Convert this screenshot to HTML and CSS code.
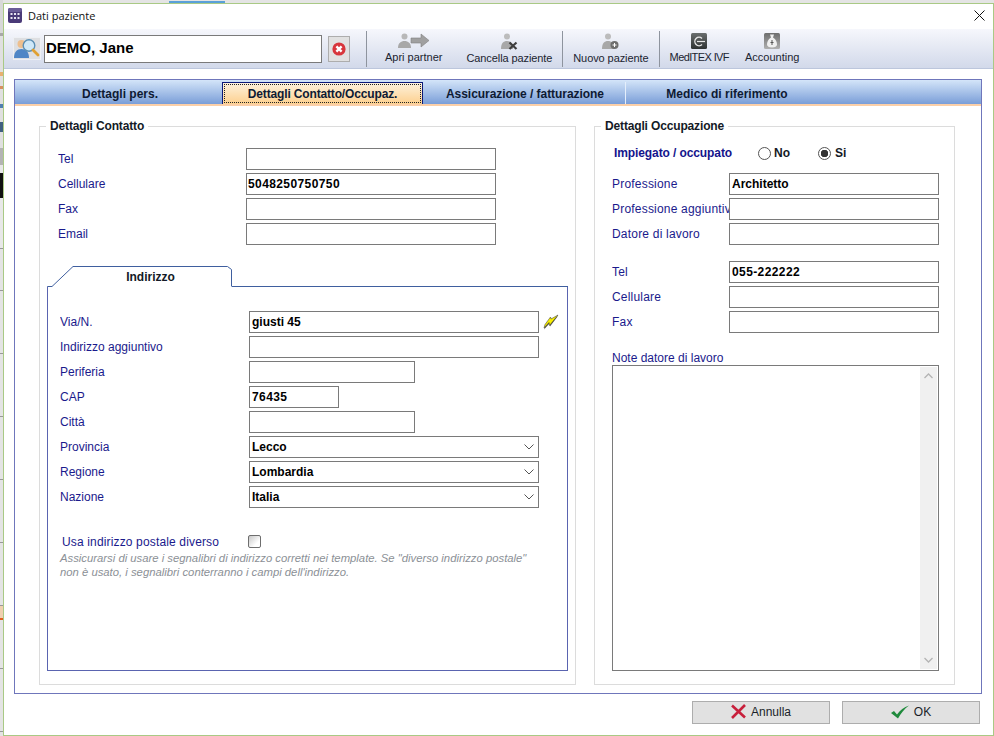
FILE: index.html
```html
<!DOCTYPE html>
<html>
    <head>
        <meta charset="UTF-8">
        <title>Dati paziente</title>
        <link rel="stylesheet" href="styles.css">
    </head>

    <body>
        <div class="window">
            <div class="titlebar">
                <svg class="app-icon" width="14" height="15" viewBox="0 0 14 15">
                    <rect width="14" height="15" rx="2" fill="#4a3a78"/>
                    <rect x="0" y="0" width="14" height="4" rx="2" fill="#6a5c98"/>
                    <g fill="#e8e4f2">
                        <rect x="2.5" y="5" width="2" height="2"/><rect x="6" y="5" width="2" height="2"/><rect x="9.5" y="5" width="2" height="2"/>
                        <rect x="2.5" y="9" width="2" height="2"/><rect x="6" y="9" width="2" height="2"/><rect x="9.5" y="9" width="2" height="2"/>
                    </g>
                </svg>
                <span class="title">Dati paziente</span>
                <svg class="close" width="11" height="11" viewBox="0 0 11 11"><path d="M.5.5l10 10M10.5.5l-10 10" stroke="#111" fill="none"/></svg>
            </div>

            <div class="toolbar">
                <div class="search-btn">
                    <svg width="26" height="21" viewBox="0 0 26 21">
                        <circle cx="7.500" cy="6" r="4" fill="#eebf8e"/>
                        <path d="M0 20c0-6 3-9 7.500-9s7.500 3 7.500 9z" fill="#4f86c6"/>
                        <circle cx="15" cy="7.500" r="5.800" fill="#cfe8f8" stroke="#5b8fb4" stroke-width="1.400"/>
                        <path d="M19 12l5 5" stroke="#e0a030" stroke-width="2.800" stroke-linecap="round"/>
                    </svg>
                </div>
                <input class="name-input" type="text" value="DEMO, Jane">
                <div class="clear-btn">
                    <svg width="14" height="14" viewBox="0 0 14 14">
                        <circle cx="7" cy="7" r="6.600" fill="#d8363c"/>
                        <path d="M4.400 4.400l5.200 5.200M9.600 4.400l-5.200 5.200" stroke="#fff" stroke-width="2.400"/>
                    </svg>
                </div>
                <div class="sep first"></div>
                <div class="tool tool-apri">
                    <svg width="32" height="16" viewBox="0 0 32 16">
                        <circle cx="6.500" cy="3.500" r="3" fill="#b8b8b8"/>
                        <path d="M0 15c0-5 3-7 6.500-7s6.500 2 6.500 7z" fill="#a8a8a8"/>
                        <path d="M13 5h10V1l8 6.500-8 6.500v-4H13z" fill="#a0a0a0" stroke="#808080" stroke-width=".6"/>
                    </svg>
                    <span>Apri partner</span>
                </div>
                <div class="tool tool-canc">
                    <svg width="17" height="17" viewBox="0 0 17 17">
                        <circle cx="6" cy="3.500" r="3" fill="#bcbcbc"/>
                        <path d="M0 16c0-6 2.500-8 6-8s6 2 6 8z" fill="#a8a8a8"/>
                        <path d="M8.500 9.500l7 6.500M15.500 9.500l-7 6.500" stroke="#3e3e3e" stroke-width="2.200"/>
                    </svg>
                    <span>Cancella paziente</span>
                </div>
                <div class="sep"></div>
                <div class="tool tool-nuovo">
                    <svg width="17" height="17" viewBox="0 0 17 17">
                        <circle cx="6" cy="3.500" r="3" fill="#bcbcbc"/>
                        <path d="M0 16c0-6 2.500-8 6-8s6 2 6 8z" fill="#a8a8a8"/>
                        <circle cx="12.500" cy="12" r="4" fill="#6e6e6e"/>
                        <path d="M10.500 12h4M12.500 10v4" stroke="#fff"/>
                    </svg>
                    <span>Nuovo paziente</span>
                </div>
                <div class="sep"></div>
                <div class="tool tool-ivf">
                    <svg width="16" height="16" viewBox="0 0 16 16">
                        <defs><linearGradient id="ivfGrad" x1="0" y1="0" x2="0" y2="1"><stop offset="0" stop-color="#6a6e6e"/><stop offset="1" stop-color="#2e3232"/></linearGradient></defs>
                        <rect width="16" height="16" rx="1.500" fill="url(#ivfGrad)"/>
                        <path d="M11 11.500a4.200 4.200 0 1 1 0-6" stroke="#e8e8e8" stroke-width="1.400" fill="none"/>
                        <path d="M6 8.500h8" stroke="#e8e8e8" stroke-width="1.200"/>
                    </svg>
                    <span>MedITEX IVF</span>
                </div>
                <div class="tool tool-acc">
                    <svg width="16" height="16" viewBox="0 0 16 16">
                        <defs><linearGradient id="accGrad" x1="0" y1="0" x2="0" y2="1"><stop offset="0" stop-color="#6e6e6e"/><stop offset="1" stop-color="#b0b0b0"/></linearGradient></defs>
                        <rect width="16" height="16" rx="1.500" fill="url(#accGrad)"/>
                        <path d="M6 1.500h4L9 4.500c3 1.500 4 5 4 7 0 2-2 3-5 3s-5-1-5-3c0-2 1-5.500 4-7z" fill="#f0f0f0"/>
                        <path d="M8 7v5M6.500 9.500h3" stroke="#555"/>
                    </svg>
                    <span>Accounting</span>
                </div>
            </div>

            <div class="frame">
                <div class="tabs">
                    <div class="tab tab-first">Dettagli pers.</div>
                    <div class="tab active"><span>Dettagli Contatto/Occupaz.</span></div>
                    <div class="tab tab-line">Assicurazione / fatturazione</div>
                    <div class="tab">Medico di riferimento</div>
                </div>

                <div class="frame-body">
                    <fieldset class="group group-left">
                        <legend>Dettagli Contatto</legend>
                        <div class="rows contact-rows">
                            <div class="row"><label>Tel</label><input class="field w250" type="text"></div>
                            <div class="row"><label>Cellulare</label><input class="field w250 digits flush" type="text" value="5048250750750"></div>
                            <div class="row"><label>Fax</label><input class="field w250" type="text"></div>
                            <div class="row"><label>Email</label><input class="field w250" type="text"></div>
                        </div>

                        <div class="address">
                            <div class="addr-head">
                                <svg class="addr-shape" width="185" height="21" viewBox="0 0 185 21">
                                    <path d="M.5 21v-.500h4.500L26 .500h154.500l4 3v17" fill="#fff" stroke="#3f5f9f"/>
                                </svg>
                                <div class="addr-title">Indirizzo</div>
                                <div class="addr-fill"></div>
                            </div>
                            <div class="addr-panel">
                                <div class="rows">
                                    <div class="row">
                                        <label>Via/N.</label><input class="field w290" type="text" value="giusti 45">
                                        <svg class="bolt" width="16" height="16" viewBox="0 0 16 16">
                                            <path d="M15 2L8.500 6 8 4 2.500 11 1 15.500l5.500-6 .5 3z" fill="#555"/>
                                            <path d="M15 1L8 5 7.500 3 2 10.500 1 14l5-5.500.5 3z" fill="#f8ee00" stroke="#333" stroke-width=".5"/>
                                        </svg>
                                    </div>
                                    <div class="row"><label>Indirizzo aggiuntivo</label><input class="field w290" type="text"></div>
                                    <div class="row"><label>Periferia</label><input class="field w166" type="text"></div>
                                    <div class="row"><label>CAP</label><input class="field w90 digits" type="text" value="76435"></div>
                                    <div class="row"><label>Città</label><input class="field w166" type="text"></div>
                                    <div class="row"><label>Provincia</label>
                                        <div class="select w290">Lecco<svg width="10" height="6" viewBox="0 0 10 6"><path d="M.5.5L5 5 9.500.5" stroke="#555" fill="none"/></svg></div>
                                    </div>
                                    <div class="row"><label>Regione</label>
                                        <div class="select w290">Lombardia<svg width="10" height="6" viewBox="0 0 10 6"><path d="M.5.5L5 5 9.500.5" stroke="#555" fill="none"/></svg></div>
                                    </div>
                                    <div class="row"><label>Nazione</label>
                                        <div class="select w290">Italia<svg width="10" height="6" viewBox="0 0 10 6"><path d="M.5.5L5 5 9.500.5" stroke="#555" fill="none"/></svg></div>
                                    </div>
                                </div>
                                <div class="postal">
                                    <label>Usa indirizzo postale diverso</label>
                                    <div class="checkbox"></div>
                                </div>
                                <p class="hint">Assicurarsi di usare i segnalibri di indirizzo corretti nei template. Se "diverso indirizzo postale"<br>non è usato, i segnalibri conterranno i campi dell'indirizzo.</p>
                            </div>
                        </div>
                    </fieldset>

                    <fieldset class="group group-right">
                        <legend>Dettagli Occupazione</legend>
                        <div class="employed">
                            <span class="employed-label">Impiegato / occupato</span>
                            <span class="radio-item radio-no"><span class="radio"></span>No</span>
                            <span class="radio-item radio-si"><span class="radio checked"></span>Si</span>
                        </div>
                        <div class="rows job-rows">
                            <div class="row"><label>Professione</label><input class="field w210" type="text" value="Architetto"></div>
                            <div class="row"><label>Professione aggiuntiva</label><input class="field w210" type="text"></div>
                            <div class="row"><label>Datore di lavoro</label><input class="field w210" type="text"></div>
                        </div>
                        <div class="rows job-rows second">
                            <div class="row"><label>Tel</label><input class="field w210 digits" type="text" value="055-222222"></div>
                            <div class="row"><label>Cellulare</label><input class="field w210" type="text"></div>
                            <div class="row"><label>Fax</label><input class="field w210" type="text"></div>
                        </div>
                        <div class="notes-label">Note datore di lavoro</div>
                        <div class="notes">
                            <div class="scrollbar">
                                <svg width="9" height="6" viewBox="0 0 9 6"><path d="M.5 5L4.500 1l4 4" stroke="#b4b4b4" fill="none" stroke-width="1.300"/></svg>
                                <svg width="9" height="6" viewBox="0 0 9 6"><path d="M.5 1l4 4 4-4" stroke="#b4b4b4" fill="none" stroke-width="1.300"/></svg>
                            </div>
                        </div>
                    </fieldset>
                </div>
            </div>

            <div class="footer">
                <div class="btn">
                    <svg width="15" height="15" viewBox="0 0 15 15"><path d="M1 1.500l13 12M14 1l-13 13" stroke="#c8203c" stroke-width="2.600" fill="none"/></svg>
                    Annulla
                </div>
                <div class="btn">
                    <svg width="18" height="14" viewBox="0 0 18 14"><path d="M0 8l3-2 3 3.500C9 5.500 13 2 18 .5 13 4 10 8.500 7 13.500z" fill="#1f8a3c"/></svg>
                    OK
                </div>
            </div>
        </div>
    </body>
</html>
```

FILE: styles.css
```css
* {
    box-sizing: border-box;
}

body {
    margin: 0;
    padding: 3px 0 0 3px;
    height: 736px;
    overflow: hidden;
    background-color: #e4e4e4;
    /* det der kan ses af programmet bag vinduet */
    background-image:
        linear-gradient(#5aa0d8, #5aa0d8),
        linear-gradient(#d8d8d8 0 33px, #a8a8a8 33px 36px, #e0e0e0 36px 72px, #e8b070 72px 76px, #e0e0e0 76px 86px, #d89060 86px 89px, #e0e0e0 89px 104px, #5080b0 104px 108px, #e0e0e0 108px 122px, #406080 122px 132px, #e0e0e0 132px 148px, #b4b4b4 148px 165px, #e8e8e8 165px 173px, #111 173px 198px, #e8e8e8 198px 248px, #999 248px 249px, #e4e4e4 249px 290px, #999 290px 291px, #e4e4e4 291px 353px, #999 353px 354px, #e4e4e4 354px 416px, #999 416px 417px, #e4e4e4 417px 479px, #999 479px 480px, #e4e4e4 480px 542px, #999 542px 543px, #e4e4e4 543px 605px, #999 605px 606px, #f0d0b0 606px 618px, #e06020 618px 620px, #e4e4e4 620px 668px, #999 668px 669px, #e4e4e4 669px 731px, #999 731px 732px, #e4e4e4 732px);
    background-size: 56px 2px, 3px 736px;
    background-position: 169px 1px, 0 0;
    background-repeat: no-repeat;
    font-family: "Liberation Sans", Arial, sans-serif;
    font-size: 12px;
}

.window {
    width: 991px;
    height: 733px;
    display: flex;
    flex-direction: column;
    background-color: white;
    border: 1px solid #a9c985;
}

/* titel */
.titlebar {
    height: 25px;
    flex: none;
    display: flex;
    align-items: center;
    padding: 0 8px 2px 4px;
}

.title {
    margin-left: 6px;
    color: #111;
    font-family: "Open Sans", sans-serif;
    font-size: 11px;
}

.close {
    margin-left: auto;
}

/* toolbar */
.toolbar {
    height: 40px;
    flex: none;
    display: flex;
    align-items: center;
    padding-left: 9px;
    background: linear-gradient(#f6f7fc, #d2d9ea);
    border-bottom: 1px solid #bcc6dc;
}

.search-btn {
    width: 28px;
    height: 23px;
    display: flex;
    justify-content: center;
    align-items: center;
    background-color: #dedfe2;
    border: 1px solid #eef0f4;
}

.name-input {
    width: 278px;
    height: 28px;
    margin-left: 3px;
    padding: 0 2px 2px 1px;
    border: 1px solid #7a7a7a;
    font-family: inherit;
    font-size: 15px;
    font-weight: bold;
    color: black;
    outline: none;
}

.clear-btn {
    width: 22px;
    height: 26px;
    margin-left: 6px;
    display: flex;
    justify-content: center;
    align-items: center;
    background-color: #e1e1e1;
    border: 1px solid #adadad;
}

.sep {
    width: 1px;
    height: 36px;
    background-color: #8e949e;
}

.sep.first {
    margin-left: 16px;
}

.tool {
    height: 36px;
    padding: 2px 10px 0;
    display: flex;
    flex-direction: column;
    align-items: center;
    gap: 2px;
    color: #1b2430;
    font-size: 11px;
    white-space: nowrap;
}

.tool svg {
    flex: none;
}

.tool-apri {
    padding-left: 18px;
    padding-right: 12px;
}

.tool-canc {
    padding-left: 12px;
    letter-spacing: -.1px;
}

.tool-nuovo {
    letter-spacing: -.08px;
}

.tool-ivf {
    letter-spacing: -.6px;
}

.tool-acc {
    padding-left: 6px;
}

/* faner */
.frame {
    width: 968px;
    height: 615px;
    flex: none;
    margin: 10px 0 0 10px;
    display: flex;
    flex-direction: column;
    border: 1px solid #6f76bb;
}

.tabs {
    height: 26px;
    flex: none;
    display: flex;
    align-items: flex-end;
    background: linear-gradient(#d4e5f9, #7a9ed8);
    border-bottom: 2px solid;
    border-image: linear-gradient(#0b2a7a 50%, #fbcfa8 50%) 1;
}

.tab {
    width: 202px;
    height: 22px;
    padding-top: 1px;
    display: flex;
    justify-content: center;
    align-items: center;
    font-weight: bold;
    color: #0e1a33;
}

.tab-first {
    width: 207px;
    padding-left: 3px;
}

.tab-line {
    width: 203px;
    padding-left: 2px;
    letter-spacing: -.05px;
    border-right: 1px solid #e4eefb;
}

.tab.active {
    width: 201px;
    padding: 1px;
    background: linear-gradient(#fdf1dc, #fdd08e);
    border: 1px solid #0b1a7a;
    border-bottom: none;
    letter-spacing: -.15px;
}

.tab.active span {
    flex: 1;
    align-self: stretch;
    display: flex;
    justify-content: center;
    align-items: center;
    padding-top: 1px;
    border: 1px dotted #222;
}

.frame-body {
    flex: 1;
    display: flex;
    gap: 18px;
    padding: 13px 0 8px 24px;
}

.group {
    margin: 0;
    padding: 15px 0 13px;
    min-width: 0;
    display: flex;
    flex-direction: column;
    border: 1px solid #dcdcdc;
}

.group-left {
    width: 537px;
}

.group-right {
    width: 361px;
}

.group legend {
    margin-left: 6px;
    padding: 0 4px;
    height: 14px;
    line-height: 14px;
    font-weight: bold;
    font-size: 12px;
    letter-spacing: -.15px;
    color: #141a26;
}

/* rækker */
.rows {
    display: flex;
    flex-direction: column;
    gap: 3px;
}

.contact-rows {
    padding-left: 18px;
}

.row {
    height: 22px;
    display: flex;
    align-items: center;
}

.row label {
    flex: none;
    color: #1a1a8c;
    overflow: hidden;
    white-space: nowrap;
}

.contact-rows .row label {
    width: 188px;
}

.addr-panel .row label {
    width: 189px;
}

.job-rows .row label {
    width: 117px;
    letter-spacing: .2px;
}

.field,
.select {
    height: 22px;
    flex: none;
    padding: 0 2px;
    background-color: white;
    border: 1px solid #7a7a7a;
    font-family: inherit;
    font-size: 12px;
    font-weight: bold;
    color: black;
    outline: none;
}

.field.digits {
    letter-spacing: .4px;
}

.field.flush {
    padding-left: 1px;
}

.w90 { width: 90px; }
.w166 { width: 166px; }
.w210 { width: 210px; }
.w250 { width: 250px; }
.w290 { width: 290px; }

.select {
    display: flex;
    justify-content: space-between;
    align-items: center;
    padding-right: 4px;
}

.bolt {
    margin-left: 4px;
}

/* adresse */
.address {
    flex: 1;
    margin: 21px 7px 0;
    display: flex;
    flex-direction: column;
}

.addr-head {
    height: 21px;
    flex: none;
    display: flex;
    position: relative;
}

.addr-shape {
    flex: none;
    display: block;
}

.addr-title {
    position: absolute;
    left: 26px;
    top: 4px;
    width: 155px;
    text-align: center;
    font-weight: bold;
    color: #141a26;
}

.addr-fill {
    flex: 1;
    border-bottom: 1px solid #3f5f9f;
}

.addr-panel {
    flex: 1;
    padding: 24px 0 0 12px;
    border: 1px solid #5a64b0;
    border-top: none;
}

.postal {
    margin-top: 27px;
    height: 13px;
    display: flex;
    align-items: center;
}

.postal label {
    width: 188px;
    padding-left: 2px;
    letter-spacing: .15px;
    color: #1a1a8c;
    white-space: nowrap;
}

.checkbox {
    width: 13px;
    height: 13px;
    background: linear-gradient(135deg, #c8c8c8, #fff 70%);
    border: 1px solid #6e6e6e;
    border-radius: 2px;
}

.hint {
    margin: 3px 0 0;
    line-height: 14px;
    font-size: 11.300px;
    font-style: italic;
    color: #8b9096;
    white-space: nowrap;
}

/* beskaeftigelse */
.employed {
    height: 18px;
    margin-top: -4px;
    flex: none;
    display: flex;
    align-items: center;
    padding-left: 19px;
    font-weight: bold;
    color: #141a26;
}

.employed-label {
    width: 144px;
    letter-spacing: -.1px;
    color: #14148c;
}

.radio-item {
    display: flex;
    align-items: center;
    gap: 3px;
}

.radio-no {
    width: 60px;
}

.radio-si {
    gap: 4px;
}

.radio {
    width: 13px;
    height: 13px;
    background-color: white;
    border: 1px solid #555;
    border-radius: 50%;
}

.radio.checked {
    background: radial-gradient(circle, #333 3.500px, white 4px);
}

.job-rows {
    margin-top: 11px;
    padding-left: 17px;
}

.job-rows.second {
    margin-top: 16px;
}

.notes-label {
    height: 14px;
    line-height: 14px;
    margin: 18px 0 0 17px;
    color: #1a1a8c;
}

.notes {
    flex: 1;
    width: 327px;
    margin-left: 17px;
    padding: 1px;
    display: flex;
    justify-content: flex-end;
    border: 1px solid #7a7a7a;
}

.scrollbar {
    width: 17px;
    display: flex;
    flex-direction: column;
    justify-content: space-between;
    align-items: center;
    padding: 6px 0;
    background-color: #f0f0f0;
}

.scrollbar svg {
    display: block;
}

/* knapper */
.footer {
    flex: 1;
    display: flex;
    justify-content: flex-end;
    gap: 12px;
    padding: 7px 13px 0 0;
}

.btn {
    width: 138px;
    height: 23px;
    padding-bottom: 2px;
    display: flex;
    justify-content: center;
    align-items: center;
    gap: 5px;
    background-color: #e1e1e1;
    border: 1px solid #adadad;
    color: #1a1f29;
}
```
